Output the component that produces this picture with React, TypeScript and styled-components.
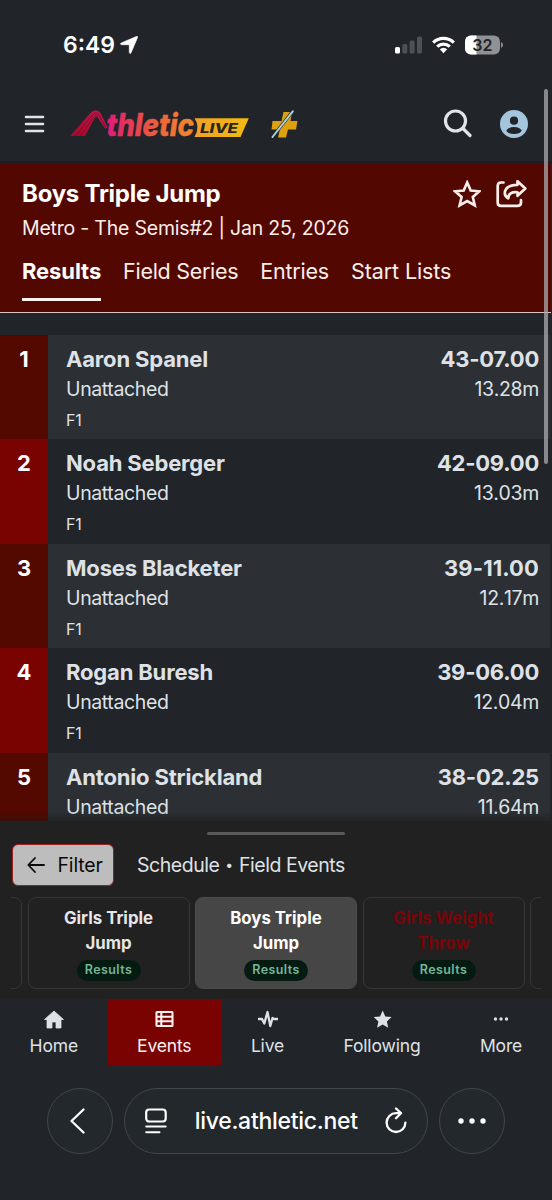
import React from 'react';
import styled, { createGlobalStyle } from 'styled-components';

const Global = createGlobalStyle`
  * { box-sizing: border-box; }
  body { margin: 0; background: #212429; }
`;

const Screen = styled.div`
  position: relative;
  width: 552px;
  height: 1200px;
  overflow: hidden;
  display: flex;
  flex-direction: column;
  background: #212429;
  color: #dee2e6;
  font-family: Inter, "Liberation Sans", sans-serif;
  white-space: nowrap;
`;

const Text = styled.span<{ $size: number; $lh: number; $weight?: number; $ls?: number; $color?: string }>`
  display: block;
  font-size: ${(p) => p.$size}px;
  line-height: ${(p) => p.$lh}px;
  font-weight: ${(p) => p.$weight ?? 400};
  letter-spacing: ${(p) => p.$ls ?? 0}px;
  color: ${(p) => p.$color ?? 'inherit'};
`;

const Metric = styled(Text)`
  font-kerning: none;
`;

const StatusBar = styled.div`
  height: 88px;
  padding: 2px 49px 0 63px;
  display: flex;
  align-items: center;
  justify-content: space-between;
  color: #fff;
`;

const StatusGroup = styled.div<{ $gap: number }>`
  display: flex;
  align-items: center;
  gap: ${(p) => p.$gap}px;
`;

const TopBar = styled.header`
  height: 75px;
  padding: 0 24px 2px 24px;
  display: flex;
  align-items: center;
  border-bottom: 2px solid #1f1c21;
`;

const Logo = styled.svg`
  margin-left: 25px;
`;

const Plus = styled.svg`
  margin-left: 19px;
`;

const TopActions = styled.div`
  margin-left: auto;
  display: flex;
  align-items: center;
  gap: 28px;
`;

const EventHeader = styled.section`
  width: 551px;
  height: 150px;
  padding: 15px 24px 0 22px;
  background: #520800;
  border-bottom: 1.5px solid #d8c4c6;
  color: #fbeeea;
`;

const TitleRow = styled.div`
  display: flex;
  justify-content: space-between;
  height: 34px;
`;

const TitleActions = styled.div`
  display: flex;
  gap: 15px;
  padding-top: 2px;
`;

const Tabs = styled.nav`
  display: flex;
  gap: 22px;
  margin-top: 14px;
`;

const Tab = styled.div<{ $active?: boolean }>`
  height: 43px;
  border-bottom: 3px solid ${(p) => (p.$active ? '#fbf2ef' : 'transparent')};
`;

const ResultList = styled.main`
  width: 550px;
  height: 508px;
  padding-top: 22px;
  overflow: hidden;
  position: relative;
`;

const ListShade = styled.div`
  position: absolute;
  left: 0;
  right: 0;
  bottom: 0;
  height: 10px;
  background: linear-gradient(rgba(20, 20, 20, 0), rgba(20, 20, 20, 0.4));
`;

const ResultRow = styled.div<{ $odd: boolean }>`
  height: 104.4px;
  display: flex;
  background: ${(p) => (p.$odd ? '#2c3034' : '#212429')};
`;

const Rank = styled.div<{ $odd: boolean }>`
  width: 48px;
  padding-top: 10px;
  text-align: center;
  background: ${(p) => (p.$odd ? '#530900' : '#780300')};
`;

const Athlete = styled.div`
  flex: 1;
  padding: 10px 0 0 18px;
`;

const Mark = styled.div`
  padding: 10px 11px 0 0;
  display: flex;
  flex-direction: column;
  align-items: flex-end;
`;

const Drawer = styled.section`
  height: 178px;
  background: #212121;
  display: flex;
  flex-direction: column;
`;

const Handle = styled.div`
  width: 138px;
  height: 2.5px;
  margin: 11px 0 0 207px;
  border-radius: 2px;
  background: #595959;
`;

const FilterRow = styled.div`
  display: flex;
  align-items: center;
  margin: 9.5px 0 11px 11.5px;
  gap: 23px;
  height: 42px;
`;

const FilterButton = styled.button`
  width: 102.5px;
  height: 42px;
  padding: 0 0 0 14px;
  display: flex;
  align-items: center;
  gap: 13px;
  border: 1.5px solid #9c2020;
  border-radius: 6px;
  background: #bdbdbd;
  color: #0a0a0a;
  font-family: inherit;
`;

const Crumbs = styled.div`
  display: flex;
  align-items: center;
  gap: 5.8px;
`;

const Cards = styled.div`
  width: 530px;
  height: 92px;
  margin-left: 11px;
  overflow: hidden;
  display: flex;
  justify-content: center;
  gap: 5.5px;
`;

const Card = styled.div<{ $active?: boolean }>`
  flex: 0 0 162px;
  height: 91.5px;
  padding-top: 7.5px;
  display: flex;
  flex-direction: column;
  align-items: center;
  border: 1.5px solid ${(p) => (p.$active ? '#4b4b4b' : '#363636')};
  border-radius: 8px;
  background: ${(p) => (p.$active ? '#464646' : '#212121')};
`;

const Badge = styled.div`
  margin-top: 4.5px;
  width: 64px;
  height: 21px;
  display: flex;
  justify-content: center;
  border-radius: 11px;
  background: #051b11;
`;

const BottomNav = styled.nav`
  height: 66px;
  display: grid;
  grid-template-columns: 107.5px 113.5px 93px 136px 102px;
`;

const NavItem = styled.div<{ $active?: boolean }>`
  display: flex;
  flex-direction: column;
  align-items: center;
  padding-top: 10px;
  gap: 5px;
  background: ${(p) => (p.$active ? '#780300' : 'transparent')};
  color: ${(p) => (p.$active ? '#fdf0ee' : '#dee2e6')};
`;

const BrowserBar = styled.footer`
  display: flex;
  gap: 11px;
  padding: 22.5px 0 0 46.5px;
  color: #fff;
`;

const RoundButton = styled.div<{ $nudge?: number }>`
  width: 66px;
  height: 66px;
  padding-right: ${(p) => p.$nudge ?? 0}px;
  border: 1.2px solid #41454d;
  border-radius: 50%;
  background: #23282c;
  display: flex;
  align-items: center;
  justify-content: center;
`;

const AddressBar = styled.div`
  width: 304.5px;
  height: 66px;
  padding: 0 19.5px 0 20.5px;
  border: 1.2px solid #41454d;
  border-radius: 33px;
  background: #23282c;
  display: flex;
  align-items: center;
  justify-content: space-between;
`;

const ScrollThumb = styled.div`
  position: absolute;
  left: 543.5px;
  top: 89px;
  width: 4.5px;
  height: 375px;
  border-radius: 3px;
  background: rgba(170, 170, 173, 0.75);
`;

const results = [
  { name: 'Aaron Spanel', mark: '43-07.00', metric: '13.28m', tracking: -0.22 },
  { name: 'Noah Seberger', mark: '42-09.00', metric: '13.03m', tracking: -0.22 },
  { name: 'Moses Blacketer', mark: '39-11.00', metric: '12.17m', tracking: 0.1 },
  { name: 'Rogan Buresh', mark: '39-06.00', metric: '12.04m', tracking: -0.22 },
  { name: 'Antonio Strickland', mark: '38-02.25', metric: '11.64m', tracking: -0.18 },
];

const events = [
  { lines: ['Girls Triple', 'Jump'], color: '#e6e6e6' },
  { lines: ['Boys Triple', 'Jump'], color: '#ffffff', active: true },
  { lines: ['Girls Weight', 'Throw'], color: '#780508' },
];

const stroke = { fill: 'none', stroke: 'currentColor', strokeLinecap: 'round', strokeLinejoin: 'round' } as const;

const LogoMark = () => (
  <Logo width="180" height="32" viewBox="70 108 180 32">
    <defs>
      <linearGradient id="word" gradientUnits="userSpaceOnUse" x1="104" y1="0" x2="196" y2="0">
        <stop offset="0" stopColor="#e0187c" />
        <stop offset="0.35" stopColor="#e8414f" />
        <stop offset="0.65" stopColor="#ee6a38" />
        <stop offset="1" stopColor="#f08b2c" />
      </linearGradient>
      <linearGradient id="tag" x1="0" y1="0" x2="1" y2="0">
        <stop offset="0" stopColor="#f0a028" />
        <stop offset="1" stopColor="#f2bb12" />
      </linearGradient>
      <linearGradient id="peak" x1="0" y1="1" x2="1" y2="0">
        <stop offset="0" stopColor="#a80528" />
        <stop offset="1" stopColor="#c01a50" />
      </linearGradient>
    </defs>
    <path d="M70 136 L90.500 113 Q96 107.500 100.500 113 L107.500 127 L105.500 129 L98 118 Q96 116 94.500 118.500 L85 136Z" fill="url(#peak)" />
    <path d="M75.500 136 L92.500 115 Q96 111 99 115 L106 127.500 M80.500 136 L93.500 117.500 Q96 114 98.500 117.500" fill="none" stroke="#5c1024" strokeWidth="0.700" />
    <text x="106.500" y="135.600" textLength="87.500" lengthAdjust="spacingAndGlyphs" fontFamily="Inter" fontWeight="800" fontStyle="italic" fontSize="31.500" fill="url(#word)" stroke="url(#word)" strokeWidth="0.400">thletic</text>
    <path d="M194.500 118.300 Q200.500 127 194.500 137 L240.500 137 L248.800 118.300Z" fill="url(#tag)" />
    <text x="200" y="132.800" textLength="38" lengthAdjust="spacingAndGlyphs" fontFamily="Inter" fontWeight="800" fontStyle="italic" fontSize="13" fill="#29241f">LIVE</text>
  </Logo>
);

const icons: Record<string, React.ReactNode> = {
  Home: <path d="M0.500 10.500 L10 2 L19.500 10.500 H17 V19 H12 V13 H8 V19 H3 V10.500Z" fill="currentColor" stroke="currentColor" strokeWidth="0.8" strokeLinejoin="round" />,
  Events: <path d="M3 3 H18 Q18.500 3 18.500 3.500 V16.500 Q18.500 17 18 17 H3 Q2.500 17 2.500 16.500 V3.500 Q2.500 3 3 3Z M2.500 7.700H18.500 M2.500 12.300H18.500 M7.300 3V17" {...stroke} strokeWidth="2.100" />,
  Live: <path d="M0.500 10 H4 L6.300 14.500 L9.500 3 L12.300 17 L14.500 9 L16 10 H19.500" {...stroke} strokeWidth="2.300" />,
  Following: <path d="M10.700 1.500 L13.300 7.400 L19.600 8.100 L14.900 12.500 L16.200 18.700 L10.700 15.500 L5.100 18.700 L6.400 12.500 L1.700 8.100 L8 7.400Z" fill="currentColor" />,
  More: <g fill="currentColor"><circle cx="4.500" cy="10" r="1.700" /><circle cx="10" cy="10" r="1.700" /><circle cx="15.500" cy="10" r="1.700" /></g>,
};

export default function App() {
  return (
    <Screen>
      <Global />
      <StatusBar>
        <StatusGroup $gap={5}>
          <Text $size={23} $lh={28} $weight={600}>6:49</Text>
          <svg width="18" height="18" viewBox="0 0 18 18"><path d="M16.500 0.500 Q18 0 17.500 1.500 L11 16.800 Q10 18.500 9.300 16.500 V9.200 Q9.200 8.700 8.500 8.700 H1.500 Q-0.500 8 1.200 7Z" fill="#fff" stroke="#fff" strokeWidth="0.700" /></svg>
        </StatusGroup>
        <StatusGroup $gap={10}>
          <svg width="27" height="18" viewBox="0 0 27 18">
            <rect x="0" y="11" width="5" height="6.500" rx="1.500" fill="#fff" />
            <g fill="#4d5054"><rect x="7.300" y="8" width="5" height="9.500" rx="1.500" /><rect x="14.600" y="4.500" width="5" height="13" rx="1.500" /><rect x="22" y="0.500" width="5" height="17" rx="1.500" /></g>
          </svg>
          <svg width="23" height="18" viewBox="0 0 23 18">
            <g fill="none" stroke="#fff" strokeWidth="3.200"><path d="M1.200 6.600 A14.800 14.800 0 0 1 21.800 6.600" /><path d="M5.200 10.700 A9 9 0 0 1 17.800 10.700" /></g>
            <path d="M7.800 13.300 Q11.500 10.300 15.200 13.300 L11.500 17.300Z" fill="#fff" />
          </svg>
          <svg width="38" height="20" viewBox="0 0 38 20">
            <defs><clipPath id="bat"><rect x="0" y="0.500" width="35" height="19" rx="6" /></clipPath></defs>
            <g clipPath="url(#bat)"><rect width="35" height="20" fill="#8f9194" /><rect width="11.500" height="20" fill="#fff" /></g>
            <path d="M36 7 Q38 8 38 10 Q38 12 36 13Z" fill="#8f9194" />
            <text x="17.300" y="15.800" textAnchor="middle" fontFamily="Inter" fontWeight="600" fontSize="16" fill="#212429">32</text>
          </svg>
        </StatusGroup>
      </StatusBar>

      <TopBar>
        <svg width="21" height="18" viewBox="0 0 21 18" color="#e2e5e8"><path d="M2 2H19 M2 9H19 M2 16H19" {...stroke} strokeWidth="2.600" /></svg>
        <LogoMark />
        <Plus width="30" height="28" viewBox="269 111 30 28">
          <path d="M283.500 113 H292 L290.500 122 H297.500 L296 130.500 H288 L286 138.500 H278 L279.800 130.500 H271.500 L272.500 122 H281.500Z" fill="#dda010" />
          <path d="M292.500 112.500 L272.500 138" stroke="#212429" strokeWidth="3" />
          <path d="M292.800 112.300 L272.500 138" stroke="#a9d2dc" strokeWidth="2" strokeLinecap="round" />
        </Plus>
        <TopActions>
          <svg width="29" height="29" viewBox="443 109 29 29" color="#e2e5e8"><g {...stroke} strokeWidth="3.200"><circle cx="455.500" cy="121" r="10" /><path d="M463 128.500 L470 135.500" /></g></svg>
          <svg width="28" height="28" viewBox="0 0 28 28"><circle cx="14" cy="14" r="14" fill="#a4c5dc" /><circle cx="14" cy="10.700" r="4.100" fill="#212429" /><ellipse cx="14" cy="20.600" rx="7.500" ry="3.500" fill="#212429" /></svg>
        </TopActions>
      </TopBar>

      <EventHeader>
        <TitleRow>
          <Text $size={24} $lh={31} $weight={700} $ls={-0.25} $color="#fff">Boys Triple Jump</Text>
          <TitleActions>
            <svg width="28" height="28" viewBox="453 180 28 28" color="#fbeeea"><path d="M467.200 182.500 L470.700 190.500 L479.300 191.300 L472.800 197 L474.800 205.400 L467.200 201 L459.600 205.400 L461.600 197 L455.100 191.300 L463.700 190.500Z" fill="none" stroke="currentColor" strokeWidth="2.600" /></svg>
            <svg width="31" height="28" viewBox="497 180 31 28" color="#fbeeea"><g {...stroke} strokeWidth="2.700"><path d="M504.500 182.500 H502 Q498.700 182.500 498.700 186 V202.500 Q498.700 205.900 502 205.900 H518.500 Q522 205.900 522 202.500 V200" /><path d="M518.500 181.200 L526.300 188.500 L518.500 195.800 V192.300 Q509.500 191.500 509.300 198.300 Q504.500 195.500 506.300 190.500 Q509 184.700 518.500 184.800Z" /></g></svg>
          </TitleActions>
        </TitleRow>
        <Text $size={19.5} $lh={32} $ls={-0.21}>Metro - The Semis#2 | Jan 25, 2026</Text>
        <Tabs>
          <Tab $active><Text $size={22} $lh={26} $weight={700} $ls={-0.1} $color="#fff">Results</Text></Tab>
          <Tab><Text $size={21.5} $lh={26} $ls={-0.3}>Field Series</Text></Tab>
          <Tab><Text $size={21.5} $lh={26} $ls={-0.2}>Entries</Text></Tab>
          <Tab><Text $size={21.5} $lh={26} $ls={-0.1}>Start Lists</Text></Tab>
        </Tabs>
      </EventHeader>

      <ResultList>
        {results.map(({ name, mark, metric, tracking }, i) => (
          <ResultRow key={name} $odd={i % 2 === 0}>
            <Rank $odd={i % 2 === 0}><Text $size={22} $lh={29} $weight={700} $color="#fff">{i + 1}</Text></Rank>
            <Athlete>
              <Text $size={22} $lh={29} $weight={700} $ls={-0.17}>{name}</Text>
              <Text $size={19.5} $lh={30} $ls={-0.38}>Unattached</Text>
              <Text $size={16} $lh={32} $ls={-0.2}>F1</Text>
            </Athlete>
            <Mark>
              <Text $size={22} $lh={29} $weight={700} $ls={tracking}>{mark}</Text>
              <Metric $size={19.5} $lh={30} $ls={-0.35}>{metric}</Metric>
            </Mark>
          </ResultRow>
        ))}
        <ListShade />
      </ResultList>

      <Drawer>
        <Handle />
        <FilterRow>
          <FilterButton>
            <svg width="18" height="18" viewBox="0 0 18 18"><path d="M17 9H1.500 M8 2L1.300 9L8 16" {...stroke} strokeWidth="1.800" /></svg>
            <Text $size={19.5} $lh={26} $ls={-0.15}>Filter</Text>
          </FilterButton>
          <Crumbs>
            <Text $size={19.5} $lh={26} $ls={-0.46}>Schedule</Text>
            <Text $size={14} $lh={26}>•</Text>
            <Text $size={19.5} $lh={26} $ls={-0.46}>Field Events</Text>
          </Crumbs>
        </FilterRow>
        <Cards>
          <Card />
          {events.map((e) => (
            <Card key={e.lines[0]} $active={e.active}>
              {e.lines.map((l) => <Text key={l} $size={16.8} $lh={25} $weight={700} $color={e.color}>{l}</Text>)}
              <Badge><Text $size={12.5} $lh={20} $weight={600} $ls={0.4} $color="#75b798">Results</Text></Badge>
            </Card>
          ))}
          <Card />
        </Cards>
      </Drawer>

      <BottomNav>
        {Object.keys(icons).map((label) => (
          <NavItem key={label} $active={label === 'Events'}>
            <svg width="20" height="20" viewBox="0 0 20 20">{icons[label]}</svg>
            <Text $size={17.5} $lh={24} $ls={-0.15}>{label}</Text>
          </NavItem>
        ))}
      </BottomNav>

      <BrowserBar>
        <RoundButton $nudge={3}><svg width="16" height="26" viewBox="0 0 16 26"><path d="M13.500 1.500 L1.500 13 L13.500 24.500" {...stroke} strokeWidth="2.300" /></svg></RoundButton>
        <AddressBar>
          <svg width="22" height="26" viewBox="0 0 22 26"><rect x="1.200" y="1.500" width="19.500" height="12" rx="3" {...stroke} strokeWidth="2.200" /><path d="M1.200 18.500H20.700 M1.200 24.300H14.500" {...stroke} strokeWidth="2" /></svg>
          <Text $size={23} $lh={30} $weight={500} $ls={-0.28}>live.athletic.net</Text>
          <svg width="22" height="27" viewBox="0 0 22 27"><path d="M16 6.200 H11 A9.400 9.400 0 1 0 20.400 15.600 M11 1.500 L16 6.200 L11 11.200" {...stroke} strokeWidth="2.300" /></svg>
        </AddressBar>
        <RoundButton $nudge={1}><svg width="28" height="6" viewBox="0 0 28 6" fill="#fff"><circle cx="3" cy="3" r="2.700" /><circle cx="14" cy="3" r="2.700" /><circle cx="25" cy="3" r="2.700" /></svg></RoundButton>
      </BrowserBar>
      <ScrollThumb />
    </Screen>
  );
}
